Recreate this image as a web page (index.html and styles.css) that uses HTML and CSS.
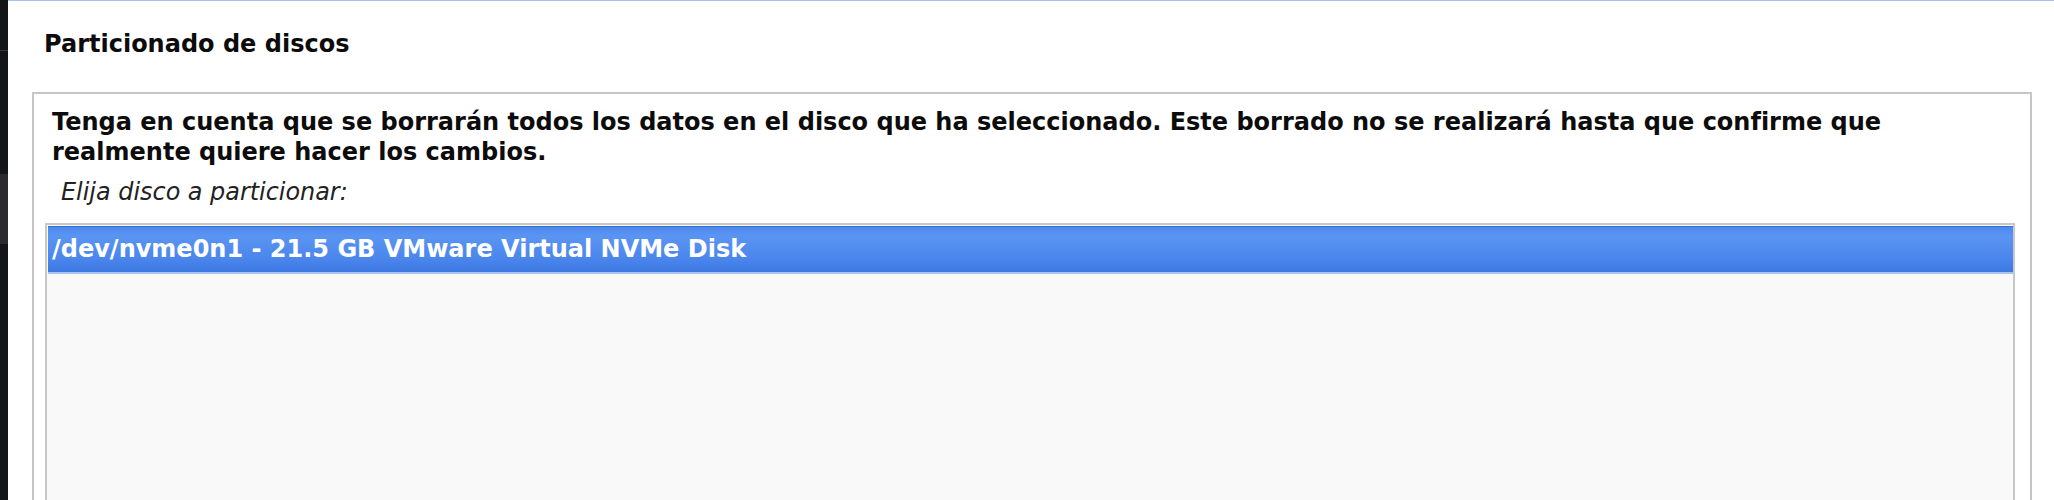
FILE: index.html
```html
<!DOCTYPE html>
<html lang="es">
<head>
<meta charset="utf-8">
<title>Particionado de discos</title>
<link rel="stylesheet" href="styles.css">
</head>
<body>
<div class="screen">
  <div class="sidebar">
    <div class="side-line"></div>
    <div class="side-gray"></div>
  </div>
  <div class="window">
    <div class="topbar"></div>
    <div class="content">
      <h1 class="title">Particionado de discos</h1>
      <div class="frame">
        <p class="note">Tenga en cuenta que se borrarán todos los datos en el disco que ha seleccionado. Este borrado no se realizará hasta que confirme que realmente quiere hacer los cambios.</p>
        <p class="prompt">Elija disco a particionar:</p>
        <div class="list">
          <div class="row selected">/dev/nvme0n1 - 21.5 GB VMware Virtual NVMe Disk</div>
        </div>
      </div>
    </div>
  </div>
</div>
</body>
</html>
```
FILE: styles.css
```css
* { box-sizing: border-box; }
html, body { margin: 0; padding: 0; background: #ffffff; }
body { width: 2054px; height: 500px; overflow: hidden; font-family: "DejaVu Sans", "Liberation Sans", sans-serif; color: #0c0c0c; }
.screen { display: flex; height: 500px; }
.sidebar { width: 8px; background: #141517; display: flex; flex-direction: column; }
.side-line { height: 1px; margin-top: 50px; background: #3a3a3a; }
.side-gray { height: 70px; margin-top: 123px; background: #2b2b2d; }
.window { flex: 1; display: flex; flex-direction: column; }
.topbar { height: 5px; background: linear-gradient(90deg, #2a52b0 0%, #2c6cbc 30%, #2b8ec4 50%, #2c6cbc 70%, #284eae 100%); border-bottom: 1px solid #a8c2ea; }
.content { flex: 1; display: flex; flex-direction: column; padding: 0 22px 0 24px; }
.title { margin: 0; padding: 28px 0 0 12px; font-size: 24px; font-weight: bold; line-height: 30px; height: 91px; }
.frame { flex: 1; border: 2px solid #c6c6c6; border-bottom: none; padding: 13px 15px 0 11px; }
.note { margin: 0 40px 0 7px; font-size: 24px; font-weight: bold; line-height: 30px; }
.prompt { margin: 10px 0 0 16px; font-size: 23.9px; font-style: italic; line-height: 30px; color: #222; }
.list { margin-top: 16px; height: 400px; border: 2px solid #c8c8c8; border-bottom: none; background: #f9f9f9; padding: 1px 0 0 1px; }
.row { height: 48px; padding: 0 0 0 4px; font-size: 24px; font-weight: bold; line-height: 45px; }
.selected { color: #ffffff; background: linear-gradient(180deg, #4d89ee 0%, #5a95f2 20%, #4a86ec 70%, #3d78e2 100%); border-top: 1px solid #3b6fd0; border-bottom: 2px solid #a9c4ef; }
```
